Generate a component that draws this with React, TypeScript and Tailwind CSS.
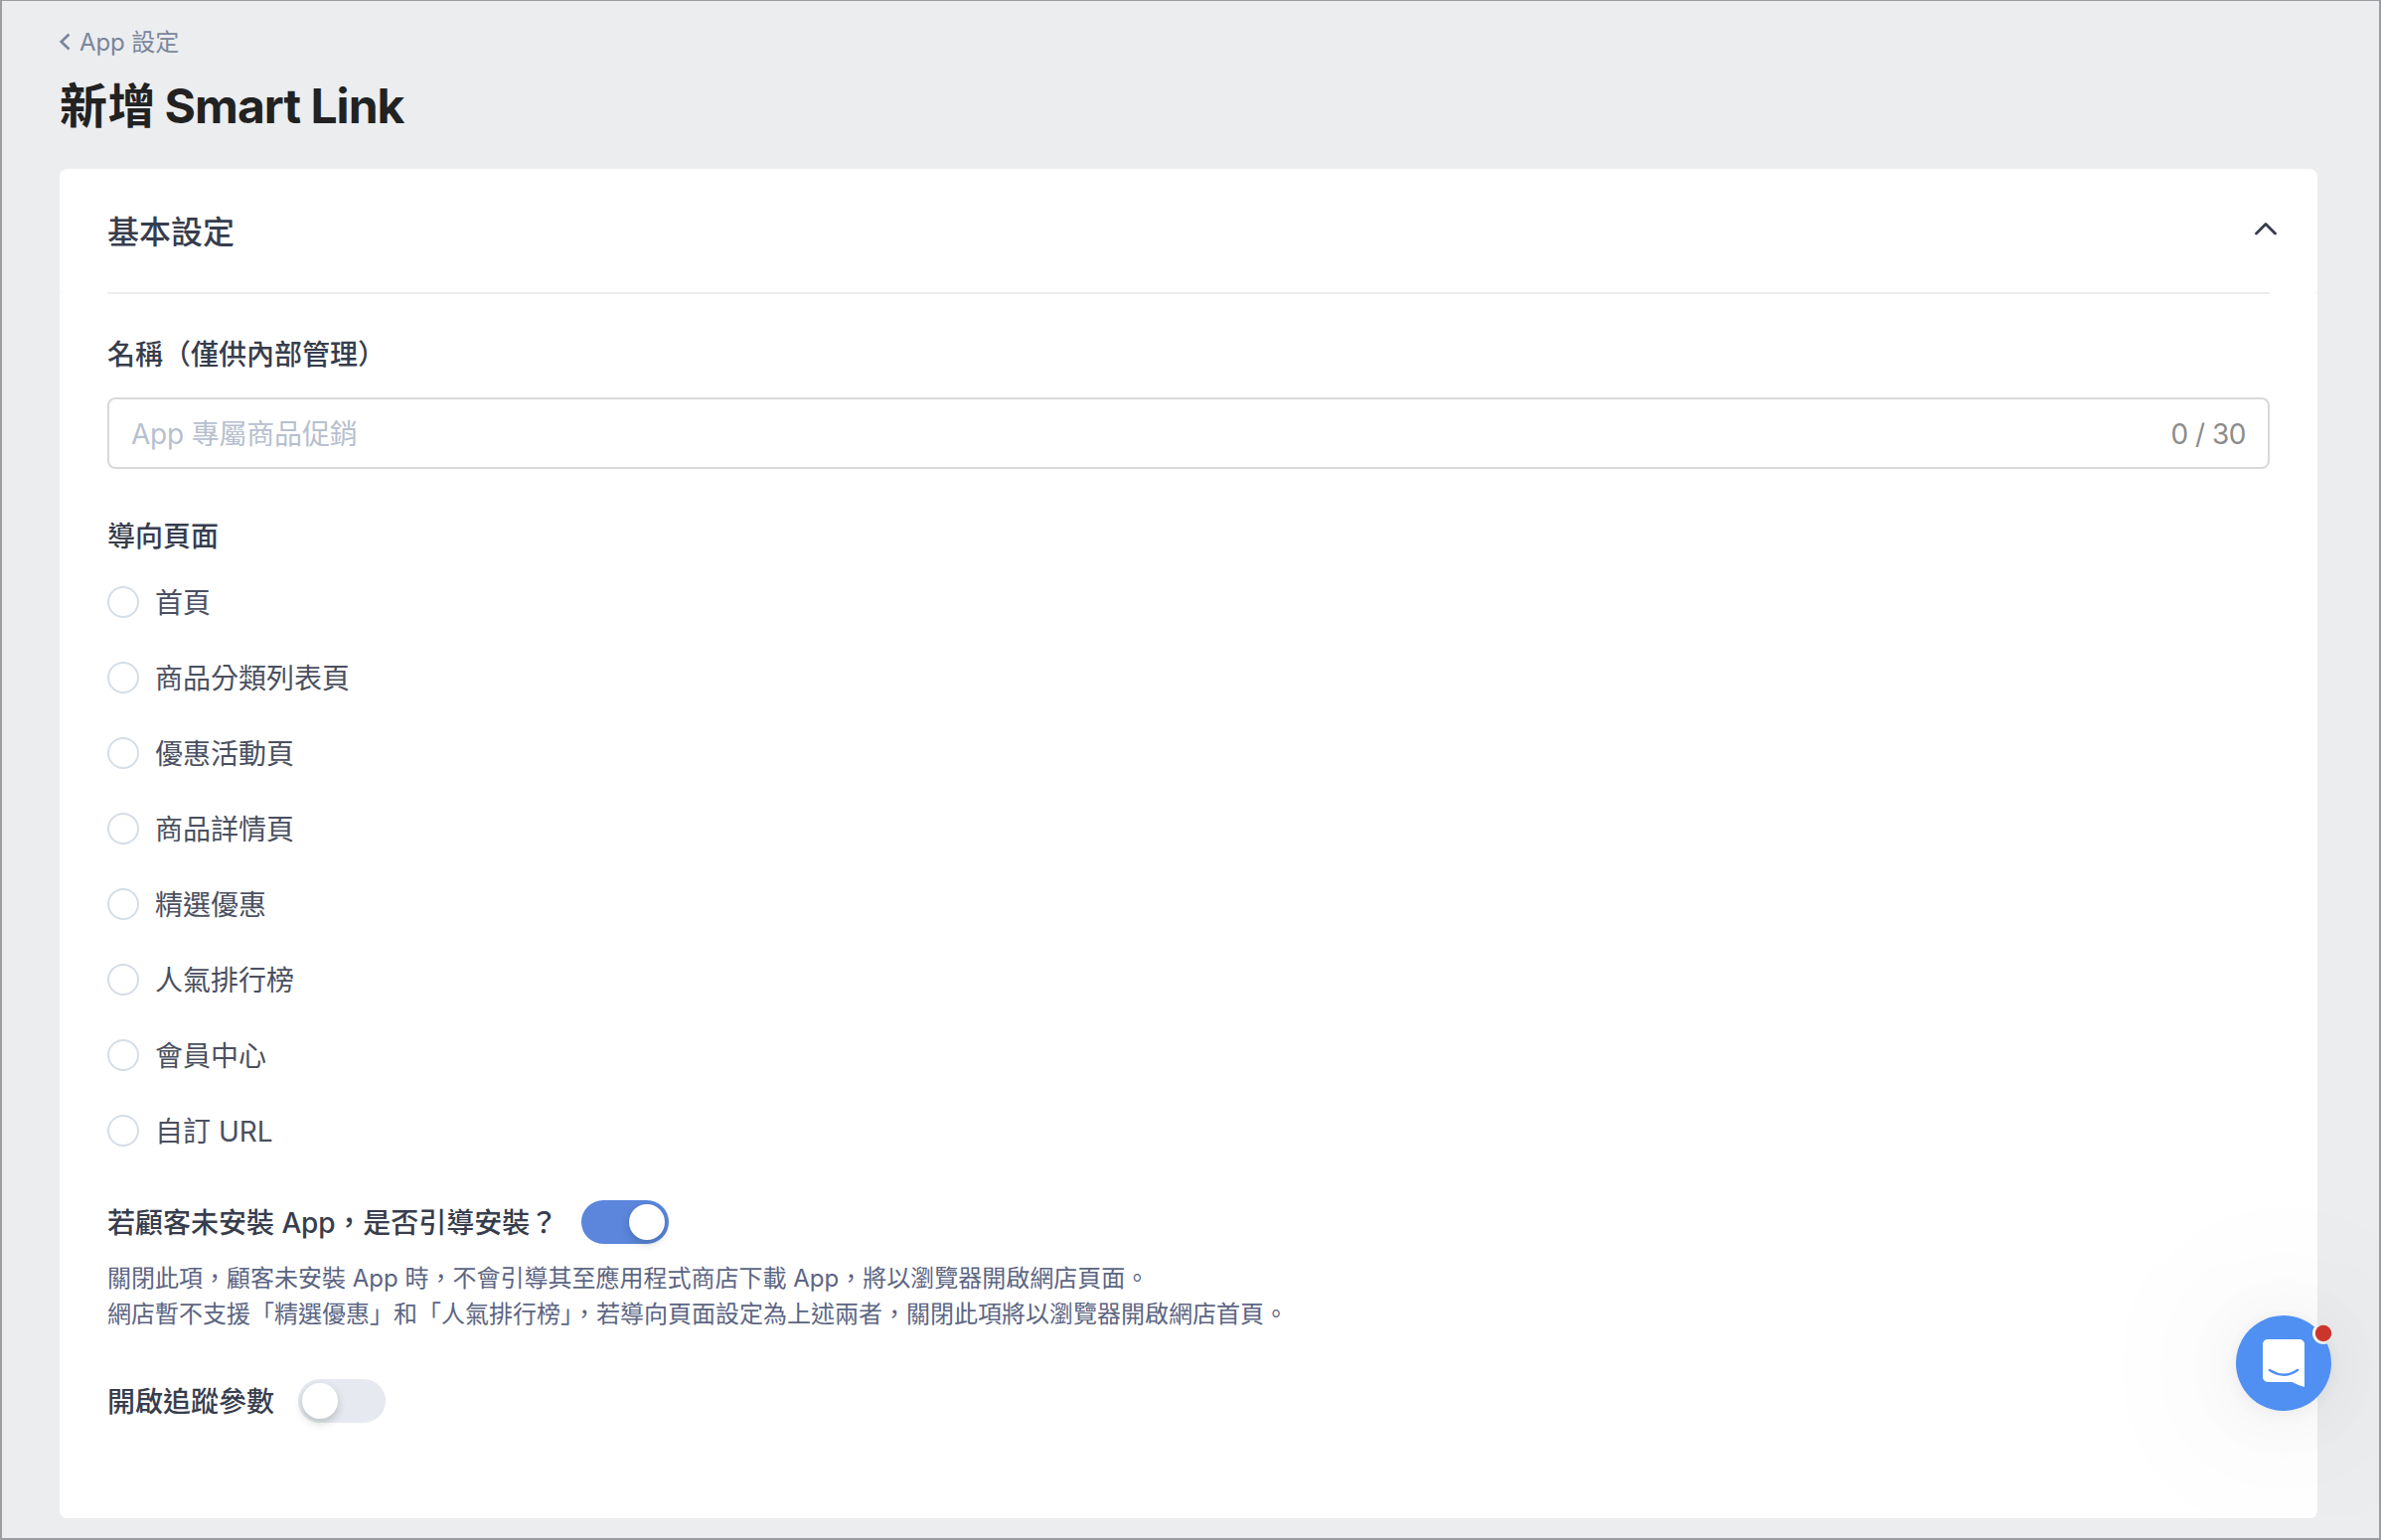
import { useState } from "react";

const pages = [
  "首頁",
  "商品分類列表頁",
  "優惠活動頁",
  "商品詳情頁",
  "精選優惠",
  "人氣排行榜",
  "會員中心",
  "自訂 URL",
];

function Toggle({ initial }: { initial: boolean }) {
  const [on, setOn] = useState(initial);
  return (
    <button
      type="button"
      role="switch"
      aria-checked={on}
      onClick={() => setOn(!on)}
      className={
        "flex h-11 w-[88px] shrink-0 items-center rounded-full p-1 " +
        (on ? "justify-end bg-[#5b86dc]" : "justify-start bg-[#e6e9f0]")
      }
    >
      <span className="size-9 rounded-full bg-white shadow-[0_4px_8px_rgba(0,35,11,0.2)]" />
    </button>
  );
}

function ChatLauncher() {
  return (
    <div className="absolute top-[1323px] left-[2248px] size-24">
      <div className="absolute inset-0 rounded-full shadow-[0_2px_12px_rgba(0,0,0,0.04),0_4px_64px_rgba(20,20,50,0.06),0_4px_170px_14px_rgba(0,0,0,0.08)]" />
      <svg viewBox="0 0 96 96" className="absolute inset-0 size-24 overflow-visible">
        <defs>
          <mask id="badge-cut">
            <rect width="96" height="96" fill="white" />
            <circle cx="88" cy="18" r="11" fill="black" />
          </mask>
        </defs>
        <circle cx="48" cy="48" r="48" fill="#5090f3" mask="url(#badge-cut)" />
        <path
          d="M32 24H64A5 5 0 0 1 69 29V72Q62 70 56.500 67H32A5 5 0 0 1 27 62V29A5 5 0 0 1 32 24Z"
          fill="white"
        />
        <path
          d="M34 55Q48 64.500 62 55"
          fill="none"
          stroke="#5090f3"
          strokeWidth="2.500"
          strokeLinecap="round"
        />
        <circle cx="88" cy="18" r="8.200" fill="#cc352c" />
      </svg>
    </div>
  );
}

export default function App() {
  return (
    <div
      lang="zh-Hant"
      className="relative h-[1550px] w-[2396px] overflow-hidden border-2 border-t border-[#9c9da0] bg-[#ecedef] pr-[62px] pl-[58px] font-['Inter','Noto_Sans_CJK_TC',sans-serif] text-[28px] text-[#373d4d]"
    >
      <a className="mt-6 flex h-9 items-center text-2xl text-[#7b859c]">
        <svg viewBox="0 0 12 18" className="mr-2 mb-0.5 h-[18px] w-3" fill="none" stroke="currentColor" strokeWidth="2.600">
          <path d="M9.500 1.500L1.700 9L9.500 16.500" />
        </svg>
        <span className="tracking-[-0.1px]">App 設定</span>
      </a>
      <h1 className="mt-2.5 h-[72px] text-5xl leading-[72px] font-bold tracking-[-0.95px] text-[#222]">
        <span className="tracking-[0.5px]">新增</span>
        <span className="tracking-[-2.800px]"> </span>
        Smart Link
      </h1>

      <main className="mt-[27px] flex h-[1358px] flex-col overflow-hidden rounded-lg bg-[#fafafa]">
        <header className="flex h-[126px] shrink-0 rounded-lg bg-white px-12">
          <div className="flex flex-1 items-center justify-between border-b-2 border-[#ecedef]">
            <h2 className="pt-1 text-[32px] font-medium">基本設定</h2>
            <svg viewBox="0 0 22 14" className="-mr-[7px] mb-1 h-3.5 w-[22px]" fill="none" stroke="currentColor" strokeWidth="2.800" strokeLinecap="round" strokeLinejoin="round">
              <path d="M1.500 12L11 2.500L20.500 12" />
            </svg>
          </div>
        </header>

        <section className="flex-1 bg-white px-12">
          <h3 className="mt-[41px] h-10 leading-10 font-medium">名稱（僅供內部管理）</h3>
          <div className="mt-[23px] flex h-[72px] items-center rounded-lg border-2 border-[#d9d9d9] px-[22px]">
            <span className="flex-1 pt-0.5 tracking-[-0.2px] text-[#b7bfcf]">App 專屬商品促銷</span>
            <span className="pt-0.5 tracking-[-0.5px] text-[#8c8c8c]">0 / 30</span>
          </div>

          <h3 className="mt-12 h-10 leading-10 font-medium">導向頁面</h3>
          <div className="mt-[26px] flex flex-col gap-9 text-[#4a5060]">
            {pages.map((page) => (
              <label key={page} className="flex h-10 items-center gap-4">
                <span className="size-8 rounded-full border-2 border-[#d5dde6]" />
                <span className="pt-0.5">{page}</span>
              </label>
            ))}
          </div>

          <div className="mt-[50px] flex h-11 items-center gap-6">
            <h3 className="pt-0.5 font-medium">
              若顧客未安裝 <span className="tracking-[-0.2px]">App</span>，是否引導安裝？
            </h3>
            <Toggle initial={true} />
          </div>
          <p className="mt-[17px] text-2xl leading-9 text-[#5c6582]">
            關閉此項，顧客未安裝 App 時，不會引導其至應用程式商店下載 App，將以瀏覽器開啟網店頁面。
            <br />
            網店暫不支援「精選優惠」和「人氣排行榜」，若導向頁面設定為上述兩者，關閉此項將以瀏覽器開啟網店首頁。
          </p>

          <div className="mt-[47px] flex h-11 items-center gap-6">
            <h3 className="pt-0.5 font-medium">開啟追蹤參數</h3>
            <Toggle initial={false} />
          </div>
        </section>
      </main>

      <ChatLauncher />
    </div>
  );
}
